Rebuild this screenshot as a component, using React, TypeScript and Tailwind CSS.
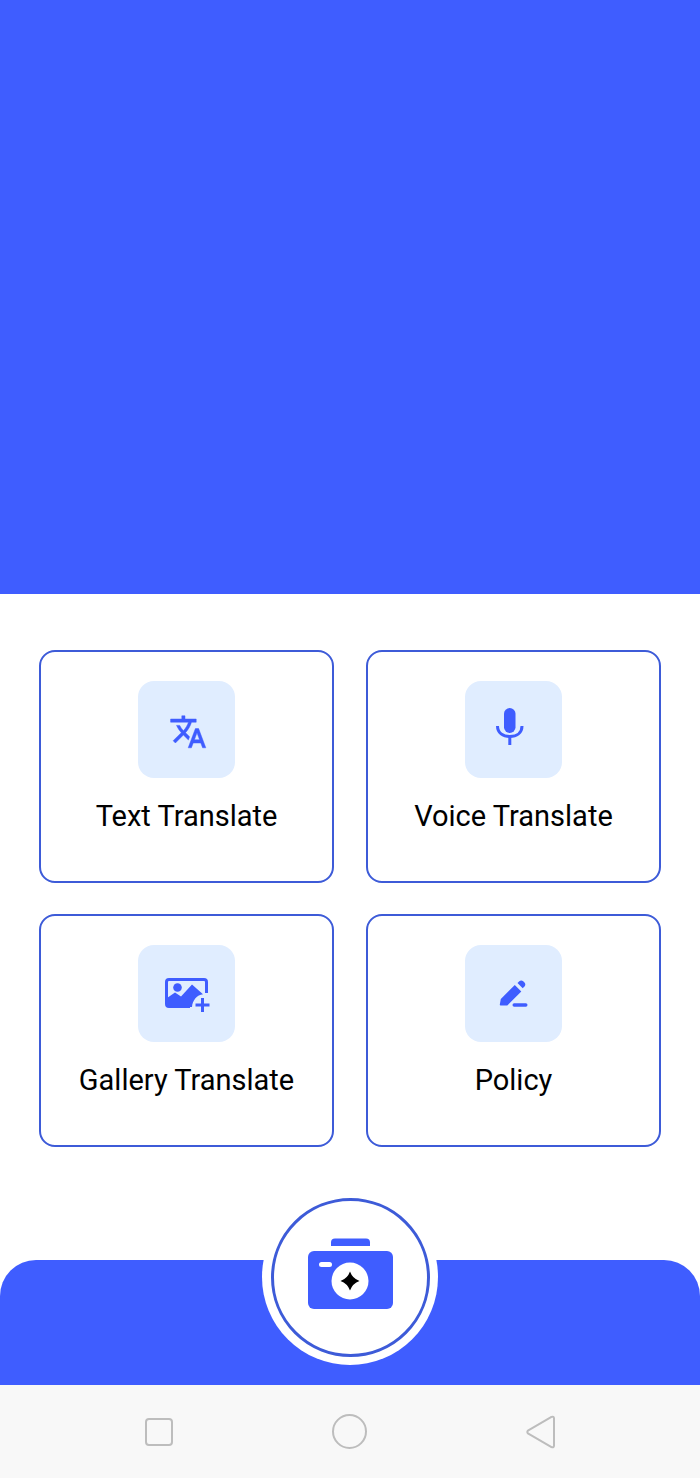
import type { ReactNode } from "react";

const TranslateIcon = () => (
  <g transform="translate(31 31.6) scale(1.6)" fill="#3f5dff" stroke="#3f5dff" strokeWidth="0.3">
    <path d="M12.87 15.07l-2.54-2.51.03-.03c1.74-1.94 2.98-4.17 3.71-6.53H17V4h-7V2H8v2H1v1.99h11.17C11.5 7.92 10.44 9.75 9 11.35 8.07 10.32 7.3 9.19 6.69 8h-2c.73 1.63 1.73 3.17 2.98 4.56l-5.09 5.02L4 19l5-5 3.11 3.11.76-2.04zM18.5 10h-2L12 22h2l1.12-3h4.75L21 22h2l-4.5-12zm-2.62 7l1.62-4.33L19.12 17h-3.24z" />
  </g>
);

const MicIcon = () => (
  <g>
    <rect x="39" y="27" width="11.5" height="25" rx="5.75" fill="#3f5dff" />
    <path d="M32.5 45c0 7 5.500 10.500 12.300 10.500S57 52 57 45" fill="none" stroke="#3f5dff" strokeWidth="3" strokeLinecap="butt" />
    <rect x="43.300" y="55" width="3" height="9" fill="#3f5dff" />
  </g>
);

const GalleryIcon = () => (
  <g>
    <path d="M52 61.500H31a2.500 2.500 0 0 1-2.500-2.500V37a2.500 2.500 0 0 1 2.500-2.500h35a2.500 2.500 0 0 1 2.500 2.500v11" fill="none" stroke="#3f5dff" strokeWidth="3" />
    <circle cx="39.500" cy="42.500" r="4.300" fill="#3f5dff" />
    <path d="M29 59v-6l8-5.500 6 4 11-12 11 9.800c-6 .7-10.500 6-11 12.700H31z" fill="#3f5dff" />
    <path d="M64.500 53v14M57.500 60h14" fill="none" stroke="#3f5dff" strokeWidth="3" />
  </g>
);

const PolicyIcon = () => (
  <g fill="#3f5dff">
    <path d="M35.500 60.500c-.4 0-.8-.4-.7-.9l1-5.600 14-14 6.500 6.500-14 14z" />
    <path d="M52.500 38l1.800-1.800c1.100-1.100 2.800-1.100 3.900 0l1.300 1.300c1.100 1.100 1.100 2.800 0 3.900L57.700 43.300z" />
    <rect x="47.500" y="58.300" width="15" height="3.400" rx="1.700" />
  </g>
);

function FeatureCard({ label, icon }: { label: string; icon: ReactNode }) {
  return (
    <div className="flex h-[233px] flex-col items-center rounded-[16px] border-2 border-[#3d5bd8] bg-white pt-[29px]">
      <div className="h-[97px] w-[97px] rounded-[16px] bg-[#e0edff]">
        <svg viewBox="0 0 97 97" className="h-full w-full">
          {icon}
        </svg>
      </div>
      <span className="mt-[20px] text-[29px] leading-[36px] text-black">{label}</span>
    </div>
  );
}

export default function App() {
  return (
    <div className="flex h-[1478px] w-[700px] flex-col bg-white font-['Roboto',sans-serif]">
      <div className="h-[594px] bg-[#3f5dff]" />

      <div className="grid grid-cols-2 gap-x-[32px] gap-y-[31px] px-[39px] pt-[56px] pb-[113px]">
        <FeatureCard label="Text Translate" icon={<TranslateIcon />} />
        <FeatureCard label="Voice Translate" icon={<MicIcon />} />
        <FeatureCard label="Gallery Translate" icon={<GalleryIcon />} />
        <FeatureCard label="Policy" icon={<PolicyIcon />} />
      </div>

      <div className="relative h-[125px] rounded-t-[36px] bg-[#3f5dff]">
        <div className="absolute top-[-71px] left-[262px] flex h-[176px] w-[176px] items-center justify-center rounded-full bg-white">
          <div className="h-[159px] w-[159px] rounded-full border-[3px] border-[#3d5bd8]">
            <svg viewBox="0 0 153 153" className="h-full w-full">
              <path d="M57 45v-3.500a4 4 0 0 1 4-4h31a4 4 0 0 1 4 4V45z" fill="#3f5dff" />
              <rect x="34" y="50" width="85" height="58" rx="6" fill="#3f5dff" />
              <rect x="45" y="61" width="13" height="5" rx="2.500" fill="#fff" />
              <circle cx="76" cy="80" r="18.500" fill="#fff" />
              <path d="M76 70.500Q78.500 77.500 85.500 80 78.500 82.500 76 89.500 73.500 82.500 66.500 80 73.500 77.500 76 70.500z" fill="#000" />
            </svg>
          </div>
        </div>
      </div>

      <div className="flex h-[93px] items-center justify-between bg-[#f8f8f8] px-[145px]">
        <div className="h-[28px] w-[28px] rounded-[4px] border-2 border-[#bdbdbd]" />
        <div className="h-[35px] w-[35px] rounded-full border-2 border-[#bdbdbd]" />
        <svg viewBox="0 0 29 34" className="h-[34px] w-[29px]">
          <path d="M25.500 1.900L1.900 15.600Q.8 17 1.900 18.400L25.500 32.100Q28 33 28 30.500V3.500Q28 1 25.500 1.900z" fill="none" stroke="#bdbdbd" strokeWidth="2" strokeLinejoin="round" />
        </svg>
      </div>
    </div>
  );
}
